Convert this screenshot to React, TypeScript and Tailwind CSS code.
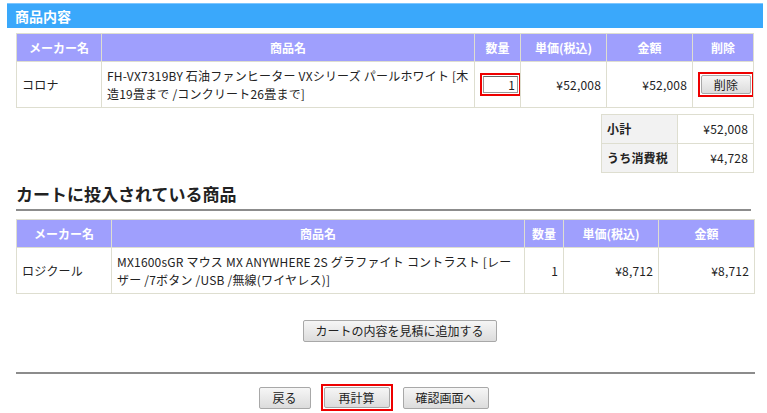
import React from 'react';

const th = 'border border-[#deded0] bg-[#9f9ffd] text-white font-bold text-[12px] h-[28px] text-center';
const td = 'border border-[#deded0] text-[12px] text-[#222] px-[5px] leading-[18px] tracking-[0.2px]';

const btn =
  'flex items-center justify-center h-[22px] px-[10px] text-[12px] text-[#222] border border-[#a8a8a8] rounded-[2px] bg-gradient-to-b from-[#f6f6f6] to-[#dcdcdc] leading-none';

export default function App() {
  return (
    <div
      className="w-[767px] h-[413px] bg-white overflow-hidden pt-[3px]"
      style={{ fontFamily: '"Noto Sans CJK JP", "Noto Sans", sans-serif' }}
    >
      {/* 商品内容 */}
      <div className="ml-[7px] w-[756px] h-[25px] bg-[#3aa8fb] border-t border-[#7cc6ff] px-[8px] text-white font-bold text-[14px] leading-[24px]">
        商品内容
      </div>

      <div className="px-[16px] pt-[5px]">
        <table className="table-fixed border-collapse w-[737px]">
          <colgroup>
            <col className="w-[85px]" />
            <col className="w-[373px]" />
            <col className="w-[46px]" />
            <col className="w-[86px]" />
            <col className="w-[86px]" />
            <col className="w-[61px]" />
          </colgroup>
          <thead>
            <tr>
              <th className={th}>メーカー名</th>
              <th className={th}>商品名</th>
              <th className={th}>数量</th>
              <th className={th}>単価(税込)</th>
              <th className={th}>金額</th>
              <th className={th}>削除</th>
            </tr>
          </thead>
          <tbody>
            <tr className="h-[46px]">
              <td className={td}>コロナ</td>
              <td className={td}>
                FH-VX7319BY 石油ファンヒーター VXシリーズ パールホワイト [木造19畳まで /コンクリート26畳まで]
              </td>
              <td className={`${td} px-[2px]`}>
                <div className="border-2 border-[#ee0000] w-[41px] h-[23px] p-[1px]">
                  <div className="w-full h-full border border-[#999] border-t-[#666] flex items-center justify-end text-[12px] leading-none pr-[2px]">
                    1
                  </div>
                </div>
              </td>
              <td className={`${td} text-right`}>¥52,008</td>
              <td className={`${td} text-right`}>¥52,008</td>
              <td className={`${td} px-[2px]`}>
                <div className="border-2 border-[#ee0000] w-[56px] h-[25px] p-[1px] mx-auto">
                  <div className="w-full h-full border border-[#a8a8a8] rounded-[2px] bg-gradient-to-b from-[#f6f6f6] to-[#dcdcdc] flex items-center justify-center text-[12px] leading-none">
                    削除
                  </div>
                </div>
              </td>
            </tr>
          </tbody>
        </table>

        <div className="flex justify-end pt-[6px] w-[738px]">
          <table className="table-fixed border-collapse w-[152px]">
            <colgroup>
              <col className="w-[76px]" />
              <col className="w-[76px]" />
            </colgroup>
            <tbody>
              <tr className="h-[29px]">
                <td className={`${td} bg-[#f2f2f2] font-bold`}>小計</td>
                <td className={`${td} text-right`}>¥52,008</td>
              </tr>
              <tr className="h-[29px]">
                <td className={`${td} bg-[#f2f2f2] font-bold`}>うち消費税</td>
                <td className={`${td} text-right`}>¥4,728</td>
              </tr>
            </tbody>
          </table>
        </div>

        {/* カートに投入されている商品 */}
        <div className="mt-[8px] border-b-2 border-[#8c8c8c] text-[17px] font-bold text-[#222] leading-[26px] pb-[2px]">
          カートに投入されている商品
        </div>

        <table className="table-fixed border-collapse w-[738px] mt-[8px]">
          <colgroup>
            <col className="w-[95px]" />
            <col className="w-[413px]" />
            <col className="w-[39px]" />
            <col className="w-[95px]" />
            <col className="w-[96px]" />
          </colgroup>
          <thead>
            <tr>
              <th className={th}>メーカー名</th>
              <th className={th}>商品名</th>
              <th className={th}>数量</th>
              <th className={th}>単価(税込)</th>
              <th className={th}>金額</th>
            </tr>
          </thead>
          <tbody>
            <tr className="h-[46px]">
              <td className={td}>ロジクール</td>
              <td className={td}>
                MX1600sGR マウス MX ANYWHERE 2S グラファイト コントラスト [レーザー /7ボタン /USB /無線(ワイヤレス)]
              </td>
              <td className={`${td} text-right`}>1</td>
              <td className={`${td} text-right`}>¥8,712</td>
              <td className={`${td} text-right`}>¥8,712</td>
            </tr>
          </tbody>
        </table>

        <div className="flex justify-center pt-[26px] pl-[32px]">
          <button className={`${btn} w-[194px]`}>カートの内容を見積に追加する</button>
        </div>

        <div className="mt-[30px] border-t-2 border-[#8c8c8c] w-[739px]" />

        <div className="flex justify-center items-center gap-[10px] pt-[10px] pr-[20px]">
          <button className={`${btn} w-[52px]`}>戻る</button>
          <div className="border-2 border-[#ee0000] p-[1px] w-[72px] h-[27px]">
            <button className={`${btn} w-full h-full`}>再計算</button>
          </div>
          <button className={`${btn} w-[86px]`}>確認画面へ</button>
        </div>
      </div>
    </div>
  );
}
